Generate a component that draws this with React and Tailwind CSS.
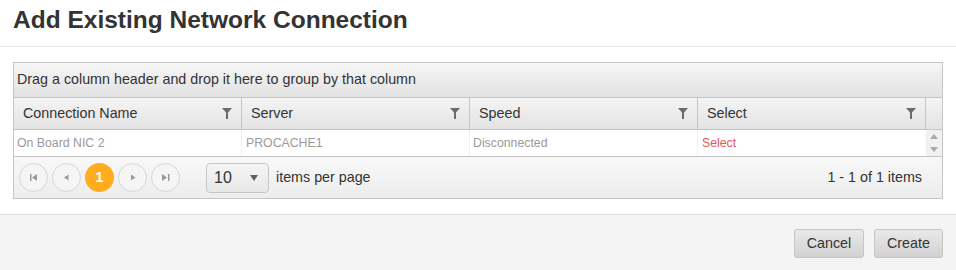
import React from 'react';

const Funnel = () => (
  <svg width="10" height="11" viewBox="0 0 10 11" className="shrink-0">
    <path d="M0 0h10L6 4.5V11H4V4.5z" fill="#6e6a66" />
  </svg>
);

const Tri = ({ dir }) => {
  const paths = {
    first: 'M1 1h1.5v7H1zM8 1v7L3 4.5z',
    prev: 'M6.5 1.5v6L2 4.5z',
    next: 'M3 1.5v6l4.5-3z',
    last: 'M1 1v7l5-3.5zM7 1h1.5v7H7z',
  };
  return (
    <svg width="9" height="9" viewBox="0 0 9 9">
      <path d={paths[dir]} fill="#9a9a9a" />
    </svg>
  );
};

const PagerBtn = ({ children, active }) => (
  <div
    className={
      active
        ? 'w-[29px] h-[29px] rounded-full bg-[#ffad1f] text-white flex items-center justify-center text-[14px] font-bold'
        : 'w-[29px] h-[29px] rounded-full border border-[#d6d6d6] bg-[#f5f5f5] flex items-center justify-center'
    }
  >
    {children}
  </div>
);

const columns = ['Connection Name', 'Server', 'Speed', 'Select'];

export default function App() {
  return (
    <div className="w-[956px] h-[270px] bg-white flex flex-col font-['Liberation_Sans',Arial,sans-serif] text-[#333]">
      <div className="h-[47px] border-b border-[#e5e5e5] px-[13px] pt-[4px]">
        <h1 className="text-[24.5px] font-bold leading-[32px] text-[#333]">Add Existing Network Connection</h1>
      </div>

      <div className="px-[13px] pt-[15px] pb-[15px]">
        <div className="w-[930px] border border-[#c5c5c5] flex flex-col">
          <div className="h-[35px] bg-gradient-to-b from-[#f6f6f6] to-[#e2e2e2] border-b border-[#c5c5c5] flex items-center px-[3px] text-[14.3px] text-[#333]">
            Drag a column header and drop it here to group by that column
          </div>

          <div className="h-[32px] flex border-b border-[#c5c5c5] bg-gradient-to-b from-[#f4f4f4] to-[#e3e3e3]">
            {columns.map((c) => (
              <div key={c} className="w-[228px] border-r border-[#c5c5c5] flex items-center justify-between pl-[9px] pr-[9px] text-[14.3px] text-[#333]">
                <span>{c}</span>
                <Funnel />
              </div>
            ))}
            <div className="flex-1" />
          </div>

          <div className="h-[27px] flex border-b border-[#c5c5c5] text-[12.3px]">
            <div className="w-[228px] border-r border-[#f0f0f0] flex items-center pl-[3px] text-[#9a9a9a]">On Board NIC 2</div>
            <div className="w-[228px] border-r border-[#f0f0f0] flex items-center pl-[4px] text-[#9a9a9a]">PROCACHE1</div>
            <div className="w-[228px] border-r border-[#f0f0f0] flex items-center pl-[3px] text-[#9a9a9a]">Disconnected</div>
            <div className="w-[228px] flex items-center pl-[4px] text-[#e8545c]">Select</div>
            <div className="flex-1 bg-[#f1f1f1] flex flex-col items-center justify-between py-[4px]">
              <svg width="8" height="5" viewBox="0 0 8 5"><path d="M0 5L4 0l4 5z" fill="#a9a9a9" /></svg>
              <svg width="8" height="5" viewBox="0 0 8 5"><path d="M0 0h8L4 5z" fill="#a9a9a9" /></svg>
            </div>
          </div>

          <div className="h-[41px] bg-gradient-to-b from-[#f8f8f8] to-[#ededed] flex items-center pl-[5px] pr-[20px]">
            <div className="flex items-center gap-[4px]">
              <PagerBtn><Tri dir="first" /></PagerBtn>
              <PagerBtn><Tri dir="prev" /></PagerBtn>
              <PagerBtn active>1</PagerBtn>
              <PagerBtn><Tri dir="next" /></PagerBtn>
              <PagerBtn><Tri dir="last" /></PagerBtn>
            </div>
            <div className="ml-[26px] w-[63px] h-[30px] rounded-[4px] border border-[#c5c5c5] bg-gradient-to-b from-[#f4f4f4] to-[#e8e8e8] flex items-center justify-between pl-[7px] pr-[10px] text-[16px] text-[#333]">
              <span className="leading-none">10</span>
              <svg width="8" height="6" viewBox="0 0 8 6"><path d="M0 0h8L4 6z" fill="#616161" /></svg>
            </div>
            <span className="ml-[7px] text-[14.3px] text-[#333]">items per page</span>
            <span className="ml-auto text-[14.3px] text-[#333]">1 - 1 of 1 items</span>
          </div>
        </div>
      </div>

      <div className="flex-1 border-t border-[#e0e0e0] bg-[#f4f4f4] flex justify-end items-start pt-[14px] pr-[13px] gap-[10px]">
        <button className="w-[70px] h-[29px] rounded-[3px] border border-[#c5c5c5] bg-gradient-to-b from-[#e9e9e9] to-[#d1d1d1] text-[14.3px] text-[#333]">Cancel</button>
        <button className="w-[69px] h-[29px] rounded-[3px] border border-[#c5c5c5] bg-gradient-to-b from-[#e9e9e9] to-[#d1d1d1] text-[14.3px] text-[#333]">Create</button>
      </div>
    </div>
  );
}
